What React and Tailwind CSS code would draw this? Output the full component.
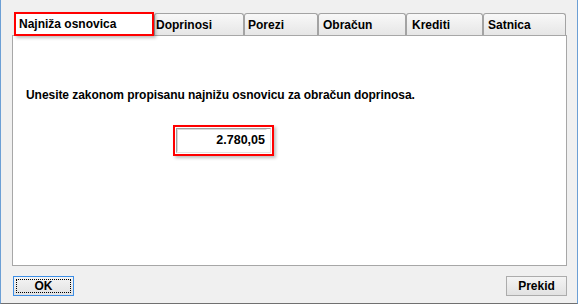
const font = { fontFamily: '"Liberation Sans", Arial, sans-serif' };

const tabs = [
  { label: "Doprinosi", w: "w-[90px]", pl: "pl-[1px]" },
  { label: "Porezi", w: "w-[74px]", pl: "pl-[3px]" },
  { label: "Obračun", w: "w-[88px]", pl: "pl-[4px]" },
  { label: "Krediti", w: "w-[77px]", pl: "pl-[5px]" },
  { label: "Satnica", w: "w-[83px]", pl: "pl-[4px]" },
];

export default function App() {
  return (
    <div className="w-[580px] h-[304px] bg-white">
      <div
        className="w-[578px] h-[304px] bg-[#f0f0f0] border-l border-r border-[#6c9fd5] border-b border-b-[#707070] flex flex-col text-[12px] font-bold text-black"
        style={font}
      >
        {/* tabs */}
        <div className="mt-[11px] ml-[12px] h-[24px] flex items-end">
          <div className="w-[140px] h-[24px] mb-[-1px] ml-[1px] border-2 border-[#ff0000] bg-white flex items-center pl-[3px] pb-[1px] shadow-[2px_2px_3px_rgba(0,0,0,0.25)] relative z-10">
            Najniža osnovica
          </div>
          {tabs.map((t) => (
            <div
              key={t.label}
              className={`${t.w} ${t.pl} h-[22px] border border-b-0 border-[#a3a3a3] rounded-t-[3px] bg-linear-to-b from-[#f8f8f8] to-[#e6e6e6] flex items-center pt-[1px]`}
            >
              {t.label}
            </div>
          ))}
        </div>

        {/* panel */}
        <div className="ml-[11px] w-[555px] h-[231px] border border-[#a7a7a7] bg-white flex flex-col">
          <p className="mt-[52px] ml-[13px] leading-[15px] tracking-[-0.05px]">
            Unesite zakonom propisanu najnižu osnovicu za obračun doprinosa.
          </p>
          <div className="mt-[22px] ml-[160px] w-[101px] h-[31px] border-2 border-[#ff0000] p-[1px] shadow-[2px_2px_3px_rgba(0,0,0,0.25)]">
            <div className="h-full border border-[#a0a0a0] border-b-[#e3e3e3] border-r-[#e3e3e3] bg-white flex items-center justify-end pr-[3px]">
              <div className="h-full w-full border border-[#d8d8d8] border-b-white border-r-white flex items-center justify-end pr-[1px] text-[12.5px]">
                2.780,05
              </div>
            </div>
          </div>
        </div>

        {/* buttons */}
        <div className="mt-[10px] ml-[12px] mr-[10px] flex justify-between">
          <button className="w-[61px] h-[20px] border border-[#3d8ee6] bg-linear-to-b from-[#f4f4f4] to-[#e2e2e2] p-[2px]">
            <span className="flex items-center justify-center h-full w-full border border-dotted border-black">
              OK
            </span>
          </button>
          <button className="w-[61px] h-[20px] border border-[#acacac] bg-linear-to-b from-[#f4f4f4] to-[#e2e2e2] flex items-center justify-center">
            Prekid
          </button>
        </div>
      </div>
    </div>
  );
}
